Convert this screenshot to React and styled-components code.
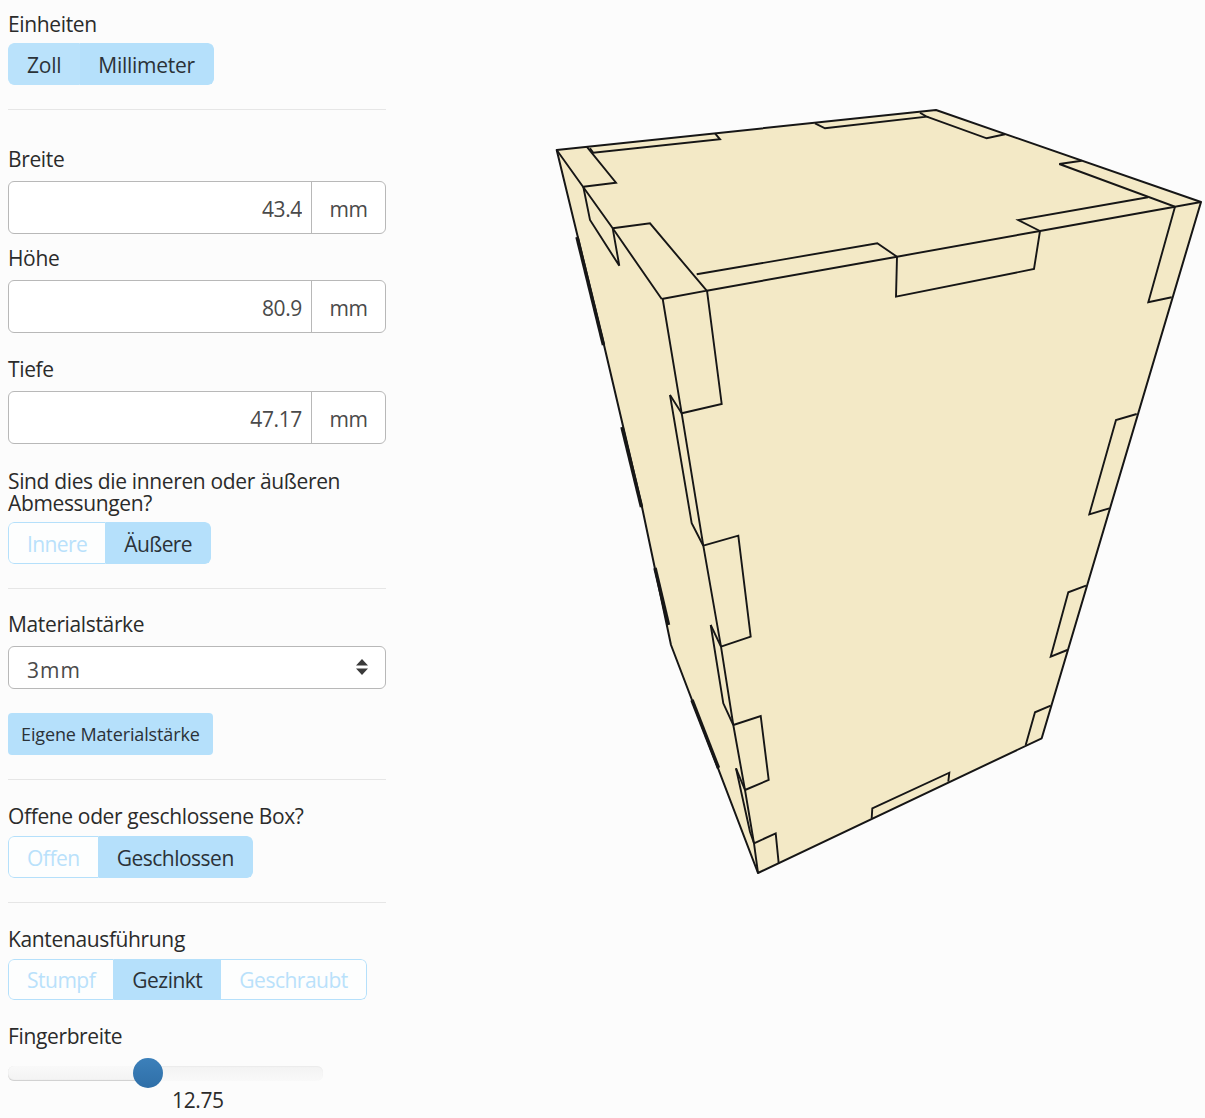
import React from 'react';
import styled, { createGlobalStyle } from 'styled-components';

const GlobalStyle = createGlobalStyle`
  html, body {
    margin: 0;
    padding: 0;
    background: #fcfcfc;
  }
  body {
    font-family: "Open Sans", "Noto Sans", sans-serif;
    font-size: 21px;
    letter-spacing: -0.36px;
    color: #2b2b2b;
  }
`;

const Page = styled.div`
  display: flex;
  align-items: flex-start;
  padding: 0 0 0 8px;
  height: 1118px;
  overflow: hidden;
`;

const Sidebar = styled.div`
  width: 378px;
  flex-shrink: 0;
  padding-top: 13px;
`;

const Viewer = styled.svg`
  display: block;
  flex-shrink: 0;
`;

const Label = styled.div`
  line-height: 22px;
  margin-top: ${(p) => p.$top || 0}px;
  margin-bottom: ${(p) => p.$bottom || 11}px;
`;

const Rule = styled.hr`
  border: 0;
  height: 1px;
  background: #e6e6e6;
  margin: 24px 0 0;
`;

const Toggle = styled.div`
  display: inline-flex;
  vertical-align: top;
  height: ${(p) => p.$height || 42}px;
  border-radius: 6px;
  overflow: hidden;
  box-sizing: border-box;
`;

const ToggleButton = styled.button`
  font: inherit;
  letter-spacing: ${(p) => p.$spacing ?? -0.6}px;
  height: 100%;
  padding: 1px 18px 0;
  border: 1px solid ${(p) => (p.$soft ? '#bae2fb' : '#b5e0fb')};
  border-left-width: 0;
  background: ${(p) => (p.$soft ? '#bae2fb' : p.$active ? '#b5e0fb' : '#fdfefe')};
  color: ${(p) => (p.$active ? '#2b3238' : '#b9e1fb')};

  &:first-child {
    border-left-width: 1px;
    border-radius: 6px 0 0 6px;
  }
  &:last-child {
    border-radius: 0 6px 6px 0;
  }
`;

const InputGroup = styled.div`
  display: flex;
  height: 53px;
  box-sizing: border-box;
  border: 1px solid #b8b8b8;
  border-radius: 6px;
  background: #fff;
  overflow: hidden;
`;

const NumberInput = styled.input`
  flex: 1;
  min-width: 0;
  border: 0;
  outline: 0;
  padding: 2px 9px 0 0;
  background: transparent;
  font: inherit;
  letter-spacing: inherit;
  text-align: right;
  color: #4a4a4a;
`;

const Unit = styled.div`
  width: 74px;
  padding-top: 2px;
  box-sizing: border-box;
  border-left: 1px solid #b8b8b8;
  display: flex;
  align-items: center;
  justify-content: center;
  color: #4a4a4a;
`;

const SelectWrap = styled.div`
  position: relative;
  height: 43px;
`;

const Select = styled.select`
  appearance: none;
  width: 100%;
  height: 100%;
  box-sizing: border-box;
  border: 1px solid #b8b8b8;
  border-radius: 6px;
  background: #fff;
  padding: 4px 0 0 18px;
  font: inherit;
  letter-spacing: 1px;
  color: #4a4a4a;
`;

const Caret = styled.svg`
  position: absolute;
  right: 17px;
  top: 13px;
  pointer-events: none;
`;

const PlainButton = styled.button`
  display: block;
  margin-top: 24px;
  height: 42px;
  padding: 0 13px;
  border: 0;
  border-radius: 4px;
  background: #b5e0fb;
  font: inherit;
  font-size: 18px;
  letter-spacing: -0.12px;
  color: #2b3238;
`;

const Track = styled.div`
  position: relative;
  width: 315px;
  height: 15px;
  border-radius: 6px;
  background: linear-gradient(#f3f3f3, #f9f9f9);
  box-shadow: inset 0 1px 1px #ececec;
`;

const TrackFill = styled.div`
  position: absolute;
  left: 0;
  top: 0;
  height: 100%;
  border-radius: 6px 0 0 6px;
  background: linear-gradient(#f9f9f9, #f3f3f3);
  box-shadow: inset 0 -1px 1px #cfcfcf;
`;

const Handle = styled.div`
  position: absolute;
  top: -8px;
  width: 30px;
  height: 30px;
  border-radius: 50%;
  background: linear-gradient(#3c80ba, #2f6fa8);
`;

const SliderValue = styled.div`
  line-height: 22px;
  padding-left: 164px;
  margin-top: 8px;
`;

const FILL = '#f3e9c6';

// umriss und linien vom bild abgelesen
const outline = '556.7,150 936,110 1201,202 1041.7,738.3 758,873 671,645 642,507 604,345';

const lines = [
  // deckel
  '586.7,146.7 616,182.7 583.3,186.7',
  '556.7,150 612.7,228.3 661.7,299',
  '612.7,228.3 650,223.3 706.7,290.7 661.7,299',
  '583.3,186.7 590,220 619.3,265.7 612.7,228.3',
  '590,148.3 593.3,152.7 720,139.3 715,133.3',
  '815,123.3 825,128.3 926.7,116.7 920,112.7',
  '926.7,116.7 986.7,138.3 1005,134.3',
  '1081.7,160.7 1059.3,164 1175,206.7 1201,202',
  '1175,206.7 1040,231 897,256.7 706.7,290.7',
  '1148,197.3 1018.3,220 1040,231',
  '1040,231 1034,269 896,296.7 897,256.7',
  '897,256.7 877.3,243.3 696.7,274.3',
  // rechte kante
  '1175,206.7 1148.3,302.3 1171.7,297.3',
  '1136.7,414 1116,420 1089.3,514.3 1109.3,508.3',
  '1086,585.7 1068.3,592.3 1050.7,656.7 1067.3,650',
  '1050.7,705.7 1035,712.3 1025.7,745',
  '948.3,781.7 949.3,772.7 872.3,808.3 871.7,818.3',
  // linke kante
  '662.7,299 681.7,413.3 721.7,404 707,290.7',
  '670,395 691.7,523.3 703.3,545.7',
  '670,395 681.7,413.3 703.3,545.7 721,646.7 733.3,725 745,790 754,843.3 758,873',
  '703.3,545.7 738.3,535.7 750.7,636.7 721,646.7',
  '710.7,625 723.3,703.3 733.3,725',
  '710.7,625 721,646.7',
  '733.3,725 760.7,716 768.7,780 745,790',
  '736,768.3 750,831.7 754,843.3',
  '736,768.3 745,790',
  '754,843.3 775.7,833.3 778.7,863.3',
];

const heavy = [
  '577,237 603.5,345',
  '622,427 641.5,507',
  '655,568 668.5,625',
  '692,700 718.5,768',
];

function BoxView() {
  return (
    <Viewer width="819" height="1118" viewBox="386 0 819 1118">
      <polygon points={outline} fill={FILL} stroke="#161616" strokeWidth="2" strokeLinejoin="round" />
      <g fill="none" stroke="#161616" strokeWidth="1.9" strokeLinejoin="miter">
        {lines.map((pts) => (
          <polyline key={pts} points={pts} />
        ))}
      </g>
      <g fill="none" stroke="#161616" strokeWidth="3.5">
        {heavy.map((pts) => (
          <polyline key={pts} points={pts} />
        ))}
      </g>
    </Viewer>
  );
}

function Measure({ label, value, top }) {
  return (
    <>
      <Label $top={top}>{label}</Label>
      <InputGroup>
        <NumberInput defaultValue={value} />
        <Unit>mm</Unit>
      </InputGroup>
    </>
  );
}

function Choice({ options, active, soft = [], height, spacing }) {
  return (
    <Toggle $height={height}>
      {options.map((o) => (
        <ToggleButton key={o} $active={active.includes(o)} $soft={soft.includes(o)} $spacing={spacing}>
          {o}
        </ToggleButton>
      ))}
    </Toggle>
  );
}

export default function App() {
  const handlePos = 125; // griff-position in px
  return (
    <>
      <GlobalStyle />
      <Page>
        <Sidebar>
          <Label $bottom={8}>Einheiten</Label>
          <Choice options={['Zoll', 'Millimeter']} active={['Zoll', 'Millimeter']} soft={['Zoll']} spacing={-0.25} />
          <Rule />

          <Measure label="Breite" value="43.4" top={38} />
          <Measure label="Höhe" value="80.9" top={13} />
          <Measure label="Tiefe" value="47.17" top={25} />

          <Label $top={26} $bottom={8}>Sind dies die inneren oder äußeren Abmessungen?</Label>
          <Choice options={['Innere', 'Äußere']} active={['Äußere']} />
          <Rule />

          <Label $top={24}>Materialstärke</Label>
          <SelectWrap>
            <Select defaultValue="3mm">
              <option>3mm</option>
            </Select>
            <Caret width="14" height="16" viewBox="0 0 14 16">
              <path d="M7 0 L13 6.5 H1 Z M1 9.5 H13 L7 16 Z" fill="#3a3a3a" />
            </Caret>
          </SelectWrap>
          <PlainButton>Eigene Materialstärke</PlainButton>
          <Rule />

          <Label $top={25} $bottom={9}>Offene oder geschlossene Box?</Label>
          <Choice options={['Offen', 'Geschlossen']} active={['Geschlossen']} spacing={-0.5} />
          <Rule />

          <Label $top={25} $bottom={9}>Kantenausführung</Label>
          <Choice options={['Stumpf', 'Gezinkt', 'Geschraubt']} active={['Gezinkt']} height={41} spacing={-0.5} />

          <Label $top={25} $bottom={19}>Fingerbreite</Label>
          <Track>
            <TrackFill style={{ width: handlePos + 15 }} />
            <Handle style={{ left: handlePos }} />
          </Track>
          <SliderValue>12.75</SliderValue>
        </Sidebar>
        <BoxView />
      </Page>
    </>
  );
}
